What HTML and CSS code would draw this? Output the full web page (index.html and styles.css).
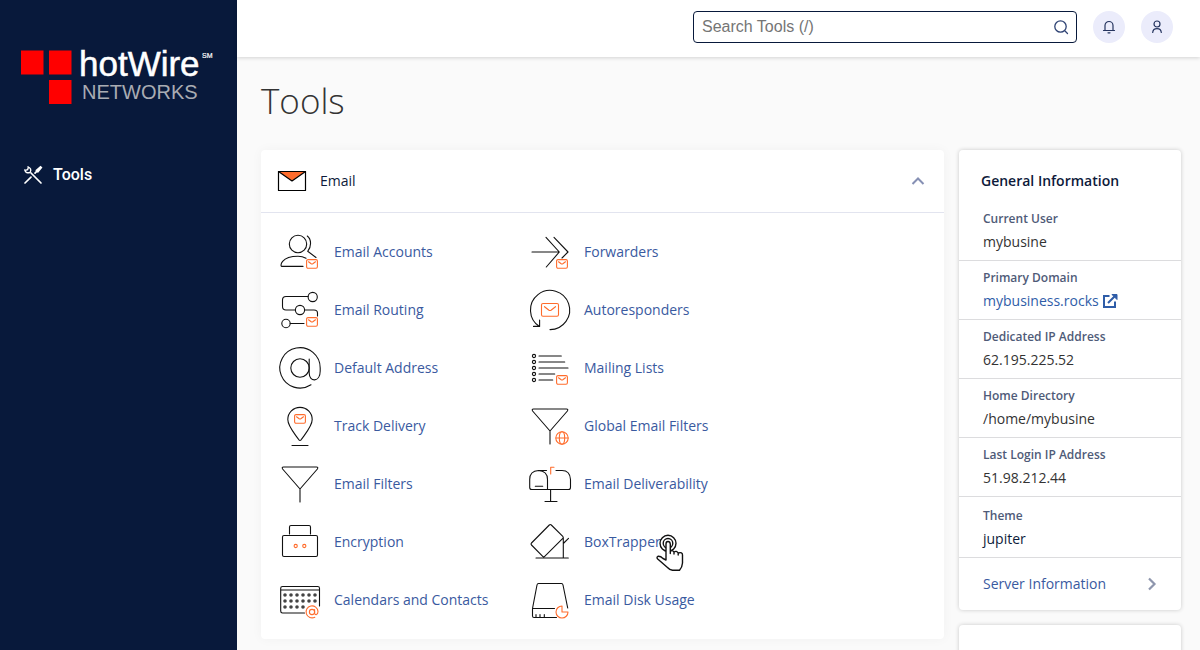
FILE: index.html
```html
<!DOCTYPE html>
<html lang="en">
<head>
<meta charset="utf-8">
<title>Tools</title>
<link rel="stylesheet" href="styles.css">
</head>
<body>
<svg class="defs" aria-hidden="true">
  <symbol id="mail" viewBox="0 0 12 10"><rect x=".6" y=".6" width="10.8" height="8.6" rx="1.4"/><path d="M2.500 2.800 L5.200 4.800 Q6 5.300 6.800 4.800 L9.500 2.800"/></symbol>
</svg>
<div class="app">
  <aside class="sidebar">
    <svg class="logo" width="200" height="60" viewBox="0 0 200 60" role="img" aria-label="hotWire Networks">
      <path fill="#f00" d="M1 6.500h22.500v24H1zM29 6.500h22.500v24H29zM29 36h22.500v24H29z"/>
      <text class="logo-main" x="59" y="31.500">hotWire</text>
      <text class="logo-mark" x="182" y="14">SM</text>
      <text class="logo-sub" x="62" y="55">NETWORKS</text>
    </svg>
    <nav>
      <a class="nav-link" href="#">
        <svg width="20" height="20" viewBox="0 0 20 20" fill="none" stroke="#fff" stroke-width="1.700" stroke-linecap="round"><path d="M2 18 L8 12.200M12 8.200 L15 5.200"/><path d="M8 8 L18 18"/><path d="M1.800 5 Q3 9 7.200 7.300 Q9 3.500 5 1.800 M2.200 5.400 L4.600 4.600 L5.400 2.200" stroke-width="1.400"/><path d="M13.500 5.300 L17.500 1.800 L18.300 2.600 L14.900 6.700Z" fill="#fff"/></svg>
        <span>Tools</span>
      </a>
    </nav>
  </aside>
  <div class="page">
    <header class="topbar">
      <form class="search">
        <input type="text" aria-label="Search Tools" placeholder="Search Tools (/)">
        <button type="button" aria-label="Search"><svg width="16" height="16" viewBox="0 0 16 16" fill="none" stroke="#2f4374" stroke-width="1.300" stroke-linecap="round"><circle cx="7.500" cy="7.500" r="5.700"/><path d="M12 12l2.500 2.500"/></svg></button>
      </form>
      <button class="round" type="button" aria-label="Notifications"><svg width="16" height="16" viewBox="0 0 16 16" fill="none" stroke="#25345f" stroke-width="1.200" stroke-linecap="round"><path d="M2.500 11.500h11M4 11.500V6.500a4 4 0 0 1 8 0v5M7 13.800h2"/></svg></button>
      <button class="round" type="button" aria-label="Account"><svg width="16" height="16" viewBox="0 0 16 16" fill="none" stroke="#25345f" stroke-width="1.200" stroke-linecap="round"><circle cx="8" cy="5" r="3"/><path d="M3.700 13.500C3.900 10.800 5.500 9.600 8 9.600s4.100 1.200 4.300 3.900"/></svg></button>
    </header>
    <main>
      <h1>Tools</h1>
      <div class="columns">
        <section class="card tools">
          <button class="tools-head" type="button" aria-expanded="true">
            <svg width="30" height="22" viewBox="0 0 30 22" stroke="#000" stroke-width="1.200" stroke-linejoin="round"><rect x="1.500" y="1.500" width="27" height="19" fill="#fff"/><path d="M1.500 1.500h27L15 11z" fill="#ff6c2c"/></svg>
            <span>Email</span>
            <svg class="chevron" width="14" height="10" viewBox="0 0 14 10" fill="none" stroke="#8690b4" stroke-width="2"><path d="M1.500 8L7 2.500 12.500 8"/></svg>
          </button>
          <div class="grid">
            <a class="tool" href="#"><svg viewBox="0 0 48 48"><circle cx="22" cy="16" r="8.700"/><path d="M31.300 8C35.300 11 35.800 18.500 31.700 23.300L40 29.500M27 38.400H5.700C4 38.400 4.500 28.300 22 28.300Q26.500 28.300 30 30.300"/><use class="accent" href="#mail" x="30" y="31" width="12" height="10"/></svg>Email Accounts</a>
            <a class="tool" href="#"><svg viewBox="0 0 48 48"><path d="M20 9.300L33.300 24 20.300 39M6 24H33M28 9.300L42 24 36 30"/><use class="accent" href="#mail" x="30" y="31" width="12" height="10"/></svg>Forwarders</a>
            <a class="tool" href="#"><svg viewBox="0 0 48 48"><circle cx="36.700" cy="11" r="4.600"/><circle cx="24" cy="24" r="4.600"/><circle cx="10" cy="37.500" r="4.200"/><path d="M32 10.500H10Q6.500 10.500 6.500 14V20.500Q6.500 24 10 24H19.400M28.600 24H38Q41.500 24 41.500 27V30M14.200 37.500H28"/><use class="accent" href="#mail" x="30" y="31" width="12" height="10"/></svg>Email Routing</a>
            <a class="tool" href="#"><svg viewBox="0 0 48 48"><path d="M24 43.600A19.600 19.600 0 1 0 13.500 40.500M7.500 40.400H13.600V34"/><g class="accent"><rect x="15.500" y="17.500" width="17" height="12.700" rx="1.500"/><path d="M18.500 20.700L23 24.200Q24 24.900 25 24.200L29.500 20.700"/></g></svg>Autoresponders</a>
            <a class="tool" href="#"><svg viewBox="0 0 48 48"><path d="M35 40.800A20.200 20.200 0 1 1 44.200 24V27C44.200 38.500 33.200 38.500 33.200 29V15"/><circle cx="24" cy="24" r="9.200"/></svg>Default Address</a>
            <a class="tool" href="#"><svg viewBox="0 0 48 48"><g><circle cx="8" cy="12" r="1.600"/><circle cx="8" cy="18" r="1.600"/><circle cx="8" cy="24" r="1.600"/><circle cx="8" cy="30" r="1.600"/><circle cx="8" cy="36" r="1.600"/></g><path d="M13 12H35.300M13 18H38.700M13 24H42M13 30H28.700M13 36H26.700"/><use class="accent" href="#mail" x="30" y="31" width="12" height="10"/></svg>Mailing Lists</a>
            <a class="tool" href="#"><svg viewBox="0 0 48 48"><path d="M22.900 37.800C19 32 11.800 24.500 11.800 17.600A12.200 12.200 0 0 1 36.200 17.600C36.200 24.500 29 32 25.100 37.800Q24 39 22.900 37.800ZM16 43.500H32"/><use class="accent" href="#mail" x="18" y="12" width="12" height="10"/></svg>Track Delivery</a>
            <a class="tool" href="#"><svg viewBox="0 0 48 48"><path d="M7.500 7H40.500Q42.500 7 41.400 9L24 29 6.600 9Q5.500 7 7.500 7ZM24 29V42"/><g class="accent"><circle cx="36" cy="36" r="6.200"/><ellipse cx="36" cy="36" rx="2.700" ry="6.200"/><path d="M30 36H42"/></g></svg>Global Email Filters</a>
            <a class="tool" href="#"><svg viewBox="0 0 48 48"><path d="M7.500 7H40.500Q42.500 7 41.400 9L24 29 6.600 9Q5.500 7 7.500 7ZM24 29V42"/></svg>Email Filters</a>
            <a class="tool" href="#"><svg viewBox="0 0 48 48"><path d="M20.500 10.500H12.500Q3.700 11 3.700 19.500V27.500Q3.700 29.500 5.700 29.500H42.500Q44.500 29.500 44.500 27.500V19.500Q44 10.500 36 10.500H30M12.500 10.500Q21.500 11 21.500 19.500V29.500M9.300 26.300H16.700M24.600 29.500V41.500M19 41.500H31"/><path class="accent" d="M24.700 14V7.300H28"/></svg>Email Deliverability</a>
            <a class="tool" href="#"><svg viewBox="0 0 48 48"><rect x="6.500" y="17.500" width="35" height="21" rx="1.500"/><path d="M13.500 16V9Q13.500 7.500 15 7.500H33Q34.500 7.500 34.500 9V16"/><g class="accent"><circle cx="19.700" cy="28" r="1.600"/><circle cx="28.300" cy="28" r="1.600"/></g></svg>Encryption</a>
            <a class="tool" href="#"><svg viewBox="0 0 48 48"><path d="M23.300 7Q24.300 6 25.300 7L36.800 18.400Q37.800 19.400 36.800 20.400L18.700 38.400Q17.700 39.400 16.700 38.400L5.500 27Q4.500 26 5.500 25ZM10 40H42.300M37.300 19.500V40M37.300 25.500L42.500 20.300"/></svg>BoxTrapper
              <svg class="pointer" viewBox="0 0 30 40" aria-hidden="true"><g fill="none"><circle cx="13" cy="10.300" r="8"/><circle cx="13" cy="10.300" r="4.800"/></g><path fill="#fff" d="M11 27V11Q11 8.500 13 8.500T15.300 11V18.500Q17 16.500 19 19Q21.500 17.300 23.200 20Q27.500 18.600 27.500 22V30Q27.300 34 24.500 37.300H17.500Q14.500 36.800 12.500 34.500L2.700 26Q1.200 24.300 3 23.300Q5.500 23 8 25.500ZM15.300 18.500V20.500M19 19V21M23.200 20V22"/></svg></a>
            <a class="tool" href="#"><svg viewBox="0 0 48 48"><path d="M28.500 37H6.500Q4.700 37 4.700 35V12.300Q4.700 10.500 6.500 10.500H41.700Q43.500 10.500 43.500 12.300V30M4.700 14H43.500"/><path class="dots" d="M9 19h0M15 19h0M21 19h0M27 19h0M33 19h0M39 19h0M9 25h0M15 25h0M21 25h0M27 25h0M33 25h0M39 25h0M9 31h0M15 31h0M21 31h0M27 31h0"/><g class="accent"><circle cx="36" cy="36" r="2.600"/><path d="M38.600 33.500V37Q38.800 38.800 40.300 38.600Q42 38 42 35.500A6 6 0 1 0 38.800 41.200"/></g></svg>Calendars and Contacts</a>
            <a class="tool" href="#"><svg viewBox="0 0 48 48"><path d="M6.500 32.500L11 9Q11.300 7.500 12.500 7.500H35.500Q36.700 7.500 37 9L41.700 32M28.500 32.500H6.500V40Q6.500 41.500 8 41.500H30.500M10 38.500V41M14 38.500V41M18.300 38.500V41"/><path class="accent" d="M36 30A6 6 0 1 0 42 36H36Z"/></svg>Email Disk Usage</a>
          </div>
        </section>
        <div class="side">
          <section class="card info">
            <h2>General Information</h2>
            <dl>
              <div><dt>Current User</dt><dd>mybusine</dd></div>
              <div><dt>Primary Domain</dt><dd><a href="#">mybusiness.rocks<svg width="16" height="16" viewBox="0 0 16 16" fill="none" stroke="#2f5da8" stroke-width="2"><path d="M7.500 3H2v11h11V8.500M6 10L13.500 2.500"/><path d="M10 1.500h5v5z" fill="#2f5da8" stroke-width="1"/></svg></a></dd></div>
              <div><dt>Dedicated IP Address</dt><dd>62.195.225.52</dd></div>
              <div><dt>Home Directory</dt><dd>/home/mybusine</dd></div>
              <div><dt>Last Login IP Address</dt><dd>51.98.212.44</dd></div>
              <div class="theme"><dt>Theme</dt><dd>jupiter</dd></div>
            </dl>
            <a class="server" href="#">Server Information<svg width="10" height="14" viewBox="0 0 10 14" fill="none" stroke="#8e96ad" stroke-width="2.200"><path d="M2 1.500L7.500 7 2 12.500"/></svg></a>
          </section>
          <section class="card next"></section>
        </div>
      </div>
    </main>
  </div>
</div>
</body>
</html>
```
FILE: styles.css
```css
* { box-sizing: border-box; }
body {
  margin: 0;
  background: #fafafa;
  color: #0d1a3a;
  font: 14px/24px "Open Sans", "Noto Sans", sans-serif;
}
a { color: #3a5a9f; text-decoration: none; }
button { font: inherit; color: inherit; border: 0; cursor: pointer; }
.defs { position: absolute; width: 0; height: 0; }

.app { display: flex; height: 100vh; overflow: hidden; }
.sidebar { flex: 0 0 237px; padding: 44px 16px 44px 20px; background: #08193b; }
.logo { display: block; }
.logo text { font-family: "Liberation Sans", Arial, sans-serif; }
.logo-main { font-size: 35px; fill: #fff; stroke: #fff; stroke-width: 0.5px; }
.logo-sub { font-size: 20px; fill: #a9acb3; }
.logo-mark { font-size: 7px; fill: #fff; stroke: #fff; stroke-width: 0.2px; }
.nav-link {
  display: flex;
  align-items: center;
  gap: 10px;
  margin-top: 59px;
  padding-left: 3px;
  color: #fff;
  font: 500 16px/24px Roboto, sans-serif;
}

.page { flex: 1; min-width: 0; }
.topbar {
  display: flex;
  justify-content: flex-end;
  gap: 16px;
  height: 57px;
  padding: 11px 27px 0 24px;
  background: #fff;
  box-shadow: 0 1px 4px rgba(0, 0, 0, 0.16);
}
.search {
  display: flex;
  flex: 0 1 384px;
  height: 32px;
  border: 1px solid #08193b;
  border-radius: 4px;
  background: #fff;
}
.search input {
  flex: 1;
  min-width: 0;
  padding: 0 8px;
  border: 0;
  outline: 0;
  background: none;
  font: 16px "Liberation Sans", Arial, sans-serif;
}
.search input::placeholder { color: #757575; }
.search button { display: flex; align-items: center; padding: 0 7px; background: none; }
.round {
  display: flex;
  align-items: center;
  justify-content: center;
  width: 32px;
  height: 32px;
  padding: 0;
  border-radius: 50%;
  background: #ebecfb;
}

main { padding: 20px 19px 0 24px; }
h1 { margin: 0 0 25px; color: #333; font-size: 35px; font-weight: 300; line-height: 48px; }
.columns { display: flex; align-items: flex-start; gap: 15px; }
.card { border-radius: 4px; background: #fff; }
.tools { flex: 1; min-width: 0; box-shadow: 0 0 12px rgba(0, 0, 0, 0.04); }
.tools-head {
  display: flex;
  align-items: center;
  gap: 13px;
  width: 100%;
  height: 63px;
  padding: 0 19px 0 16px;
  border-bottom: 1px solid #e2e4ef;
  background: none;
}
.chevron { margin-left: auto; }
.grid { display: grid; grid-template-columns: 250px 250px; padding: 10px 15px; }
.tool { position: relative; display: flex; align-items: center; gap: 10px; height: 58px; }
.tool svg {
  flex: none;
  width: 48px;
  height: 48px;
  fill: none;
  stroke: #111;
  stroke-width: 1.1px;
  stroke-linecap: round;
  stroke-linejoin: round;
}
.tool .accent { stroke: #ff6c2c; }
.tool .dots { stroke: #444; stroke-width: 3.6px; }
.tool .pointer { position: absolute; left: 129px; top: 20px; width: 30px; height: 40px; stroke-width: 1.4px; }

.side { display: grid; flex: 0 0 222px; gap: 15px; }
.side .card { box-shadow: 0 0 4px rgba(0, 0, 0, 0.2); }
h2 { margin: 0; padding: 19px 22px 9px; font-size: 14px; font-weight: 600; line-height: 24px; }
dl { margin: 0; }
dl div { padding: 8px 24px 4px; border-bottom: 1px solid #dcdcde; }
dl .theme { padding-top: 10px; }
dt { color: #4f5b78; font-size: 12px; font-weight: 600; line-height: 18px; }
dd { margin: 0; color: #333; line-height: 28px; }
dd a { display: flex; align-items: center; gap: 3px; color: #2f5da8; }
.theme dd { color: #0d1a3a; }
.server { display: flex; align-items: center; justify-content: space-between; height: 52px; padding: 0 24px; }
.next { height: 200px; }
```
